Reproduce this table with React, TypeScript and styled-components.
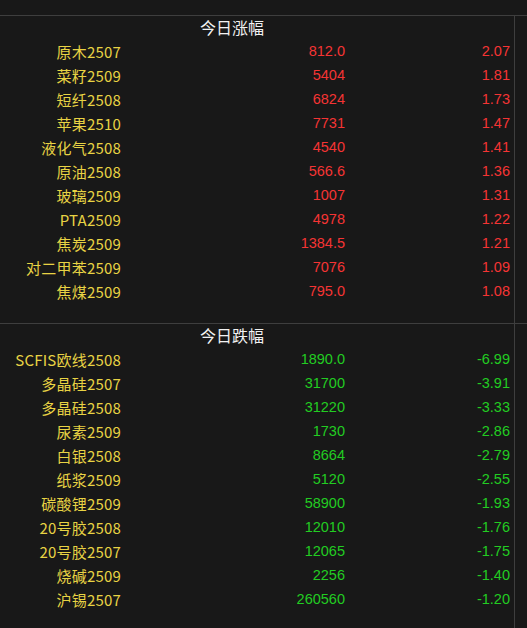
import styled, { createGlobalStyle } from "styled-components";
import { FC } from "react";

type Quote = { name: string; price: string; pct: string };

const gainers: Quote[] = [
  { name: "原木2507", price: "812.0", pct: "2.07" },
  { name: "菜籽2509", price: "5404", pct: "1.81" },
  { name: "短纤2508", price: "6824", pct: "1.73" },
  { name: "苹果2510", price: "7731", pct: "1.47" },
  { name: "液化气2508", price: "4540", pct: "1.41" },
  { name: "原油2508", price: "566.6", pct: "1.36" },
  { name: "玻璃2509", price: "1007", pct: "1.31" },
  { name: "PTA2509", price: "4978", pct: "1.22" },
  { name: "焦炭2509", price: "1384.5", pct: "1.21" },
  { name: "对二甲苯2509", price: "7076", pct: "1.09" },
  { name: "焦煤2509", price: "795.0", pct: "1.08" },
];

const losers: Quote[] = [
  { name: "SCFIS欧线2508", price: "1890.0", pct: "-6.99" },
  { name: "多晶硅2507", price: "31700", pct: "-3.91" },
  { name: "多晶硅2508", price: "31220", pct: "-3.33" },
  { name: "尿素2509", price: "1730", pct: "-2.86" },
  { name: "白银2508", price: "8664", pct: "-2.79" },
  { name: "纸浆2509", price: "5120", pct: "-2.55" },
  { name: "碳酸锂2509", price: "58900", pct: "-1.93" },
  { name: "20号胶2508", price: "12010", pct: "-1.76" },
  { name: "20号胶2507", price: "12065", pct: "-1.75" },
  { name: "烧碱2509", price: "2256", pct: "-1.40" },
  { name: "沪锡2507", price: "260560", pct: "-1.20" },
];

const GlobalStyle = createGlobalStyle`
  html, body {
    margin: 0;
    padding: 0;
    background: #181818;
  }
`;

const Page = styled.div`
  width: 527px;
  height: 628px;
  padding-top: 15px;
  box-sizing: border-box;
  display: flex;
  flex-direction: column;
  background: #181818;
  overflow: hidden;
`;

const Section = styled.section<{ $fill?: boolean }>`
  border-top: 1px solid #3e3e3e;
  display: flex;
  flex: ${(p) => (p.$fill ? 1 : "none")};
`;

const Panel = styled.div<{ $gap: number }>`
  width: 514px;
  border-right: 1px solid #3e3e3e;
  padding-bottom: ${(p) => p.$gap}px;
`;

const Title = styled.div`
  height: 24px;
  box-sizing: border-box;
  padding: 0 0 3px 200px;
  display: flex;
  align-items: center;
  color: #f2f2f2;
  font-family: "Noto Sans CJK SC", sans-serif;
  font-size: 16px;
`;

const Row = styled.div`
  display: grid;
  grid-template-columns: 121px 224px 165px;
  height: 24px;
  box-sizing: border-box;
  padding-bottom: 2px;
  align-items: center;
`;

const Name = styled.span`
  text-align: right;
  color: #e8d344;
  font-family: "Noto Sans CJK SC", sans-serif;
  font-size: 15px;
  letter-spacing: 0.2px;
  white-space: nowrap;
`;

const Num = styled.span<{ $up: boolean }>`
  text-align: right;
  color: ${(p) => (p.$up ? "#f53434" : "#22cc22")};
  font-family: "Liberation Sans", Arial, sans-serif;
  font-size: 14.5px;
`;

const Board: FC<{ title: string; rows: Quote[]; up: boolean; gap: number; fill?: boolean }> = ({
  title,
  rows,
  up,
  gap,
  fill,
}) => (
  <Section $fill={fill}>
    <Panel $gap={gap}>
      <Title>{title}</Title>
      {rows.map((r) => (
        <Row key={r.name}>
          <Name>{r.name}</Name>
          <Num $up={up}>{r.price}</Num>
          <Num $up={up}>{r.pct}</Num>
        </Row>
      ))}
    </Panel>
  </Section>
);

const App: FC = () => (
  <>
    <GlobalStyle />
    <Page>
      <Board title="今日涨幅" rows={gainers} up gap={19} />
      <Board title="今日跌幅" rows={losers} up={false} gap={0} fill />
    </Page>
  </>
);

export default App;
